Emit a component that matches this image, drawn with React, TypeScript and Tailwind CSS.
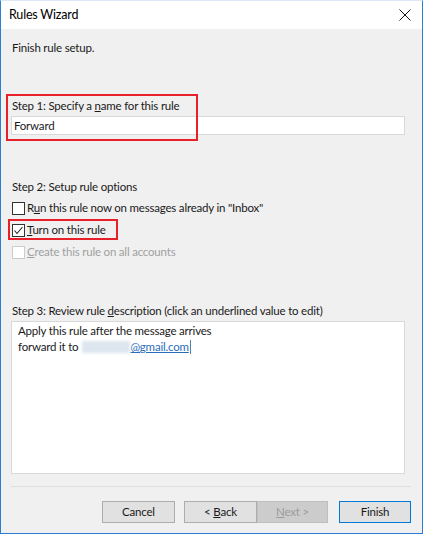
import React from "react";

function Check({ checked, disabled }: { checked?: boolean; disabled?: boolean }) {
    return (
        <span
            className={
                "inline-flex w-[13px] h-[13px] border items-center justify-center bg-white shrink-0 " +
                (disabled ? "border-[#cccccc]" : "border-[#333333]")
            }
        >
            {checked && (
                <svg width="11" height="11" viewBox="0 0 11 11">
                    <path d="M1.5 5.5 L4 8.5 L9.5 2" fill="none" stroke="#222" strokeWidth="1.1" />
                </svg>
            )}
        </span>
    );
}

export default function App() {
    return (
        <div
            className="w-[423px] h-[535px] bg-white pb-[1px]"
            style={{ fontFamily: 'Lato, "Noto Sans", sans-serif' }}
        >
            <div className="h-full flex flex-col border-x border-b border-[#2b7fd1] border-t border-t-[#dbe8f5] text-[11.5px] tracking-[-0.2px] text-[#1a1a1a]">
                {/* title bar */}
                <div className="h-[28px] bg-white flex items-center justify-between pl-[8px] pr-[11px]">
                    <span className="text-[12.5px] text-black">Rules Wizard</span>
                    <svg width="12" height="12" viewBox="0 0 12 12">
                        <path d="M0.5 0.5 L11.5 11.5 M11.5 0.5 L0.5 11.5" stroke="#111" strokeWidth="1" />
                    </svg>
                </div>

                <div className="flex-1 bg-[#f0f0f0] flex flex-col px-[10px]">
                    <div className="pt-[11px] pl-[1px] leading-[16px]">Finish rule setup.</div>

                    {/* step 1 */}
                    <div className="mt-[42px] relative">
                        <div className="absolute left-[-5px] top-[-4px] w-[192px] h-[47px] border-2 border-[#e8202a] pointer-events-none" />
                        <div className="pl-[1px] leading-[16px]">
                            Step 1: Specify a <span className="underline">n</span>ame for this rule
                        </div>
                        <div className="mt-[2px] mr-[7px] h-[19px] bg-white border border-[#d9d9d9] flex items-center px-[2px] leading-[16px]">
                            Forward
                        </div>
                    </div>

                    {/* step 2 */}
                    <div className="mt-[44px] pl-[1px] leading-[16px]">Step 2: Setup rule options</div>
                    <div className="mt-[5px] flex items-center gap-[2px] pl-[1px] leading-[16px]">
                        <Check />
                        <span>
                            R<span className="underline">u</span>n this rule now on messages already in "Inbox"
                        </span>
                    </div>
                    <div className="mt-[6px] relative flex items-center gap-[2px] pl-[1px] leading-[16px]">
                        <div className="absolute left-[-3px] top-[-3px] w-[110px] h-[21px] border-2 border-[#e8202a] pointer-events-none" />
                        <Check checked />
                        <span>
                            <span className="underline">T</span>urn on this rule
                        </span>
                    </div>
                    <div className="mt-[6px] flex items-center gap-[2px] pl-[1px] leading-[16px] text-[#a0a0a0]">
                        <Check disabled />
                        <span>
                            <span className="underline">C</span>reate this rule on all accounts
                        </span>
                    </div>

                    {/* step 3 */}
                    <div className="mt-[43px] pl-[1px] leading-[16px]">
                        Step 3: Review rule <span className="underline">d</span>escription (click an underlined value to edit)
                    </div>
                    <div className="mt-[2px] mr-[7px] h-[153px] bg-white border border-[#d9d9d9] px-[6px] pt-[1px] leading-[16px]">
                        <div>Apply this rule after the message arrives</div>
                        <div className="flex items-center">
                            <span>forward it to</span>
                            <span className="ml-[4px] inline-block w-[48px] h-[12px] bg-[#dde6ee] blur-[1.5px]" />
                            <span className="text-[#2a6ebb] underline">@gmail.com</span>
                            <span className="w-[1px] h-[14px] bg-[#5a7fa8] ml-[1px]" />
                        </div>
                    </div>

                    {/* separator */}
                    <div className="mt-[12px] mr-[1px] border-t border-[#dfdfdf]" />

                    {/* buttons */}
                    <div className="mt-[14px] flex justify-end pr-[1px]">
                        <button className="w-[73px] h-[22px] bg-[#e1e1e1] border border-[#adadad] text-[#1a1a1a]">
                            Cancel
                        </button>
                        <button className="ml-[9px] w-[73px] h-[22px] bg-[#e1e1e1] border border-[#adadad] text-[#1a1a1a]">
                            &lt; <span className="underline">B</span>ack
                        </button>
                        <button className="w-[71px] h-[22px] bg-[#cccccc] border border-[#bfbfbf] text-[#9b9b9b]">
                            <span className="underline">N</span>ext &gt;
                        </button>
                        <button className="ml-[11px] w-[72px] h-[22px] bg-[#e1e1e1] border border-[#0078d7] text-[#1a1a1a]">
                            Finish
                        </button>
                    </div>
                </div>
            </div>
        </div>
    );
}
